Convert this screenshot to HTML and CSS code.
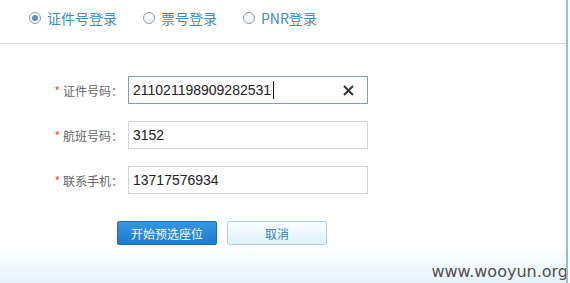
FILE: index.html
```html
<!DOCTYPE html>
<html lang="zh-CN">
<head>
    <meta charset="UTF-8">
    <title>选座登录</title>
    <link rel="stylesheet" href="styles.css">
</head>
<body>
    <div class="frame">
        <div class="tabs">
            <label class="tab"><span class="radio checked"></span>证件号登录</label>
            <label class="tab"><span class="radio"></span>票号登录</label>
            <label class="tab"><span class="radio"></span>PNR登录</label>
        </div>

        <div class="form">
            <div class="row">
                <div class="label"><span class="star">*</span>证件号码：</div>
                <div class="field focused">
                    <span class="value">211021198909282531</span><span class="caret"></span>
                    <svg class="clear" width="11" height="11" viewBox="0 0 11 11">
                        <path d="M1 1L10 10M10 1L1 10" stroke="#333" stroke-width="2" fill="none"/>
                    </svg>
                </div>
            </div>
            <div class="row">
                <div class="label"><span class="star">*</span>航班号码：</div>
                <div class="field"><span class="value">3152</span></div>
            </div>
            <div class="row">
                <div class="label"><span class="star">*</span>联系手机：</div>
                <div class="field"><span class="value">13717576934</span></div>
            </div>

            <div class="buttons">
                <button class="btn primary">开始预选座位</button>
                <button class="btn cancel">取消</button>
            </div>
        </div>

        <div class="watermark">www.wooyun.org</div>
    </div>
</body>
</html>
```

FILE: styles.css
```css
body {
    margin: 0;
    background: #fff;
    font-family: "Noto Sans CJK SC", sans-serif;
}
.frame {
    position: relative;
    width: 566px;
    height: 283px;
    border-right: 2px solid #8cbfe2;
    background: linear-gradient(to bottom, #fff 0, #fff 245px, #e6f3fb 283px);
    overflow: hidden;
}
.tabs {
    display: flex;
    align-items: center;
    gap: 26px;
    height: 35px;
    padding: 0 0 8px 29px;
    border-bottom: 1px solid #d3dbe3;
    background: #fff;
}
.tab {
    display: flex;
    align-items: center;
    gap: 6px;
    font-size: 14px;
    color: #3a8cc6;
}
.radio {
    width: 10px;
    height: 10px;
    border: 1px solid #8e9aa6;
    border-radius: 50%;
    background: linear-gradient(#fff, #eef1f4);
    display: flex;
    align-items: center;
    justify-content: center;
}
.radio.checked::after {
    content: "";
    width: 6px;
    height: 6px;
    border-radius: 50%;
    background: #4f93d4;
}
.form {
    padding-top: 32px;
}
.row {
    display: flex;
    align-items: center;
    gap: 5px;
    margin-bottom: 17px;
}
.label {
    width: 73px;
    padding-left: 50px;
    text-align: right;
    font-size: 12px;
    color: #666;
    white-space: nowrap;
}
.star {
    color: #e64a3c;
    margin-right: 3px;
}
.field {
    display: flex;
    align-items: center;
    box-sizing: border-box;
    width: 240px;
    height: 28px;
    padding: 0 13px 0 4px;
    border: 1px solid #cfd4d8;
    background: #fff;
    font-family: "Liberation Sans", Arial, sans-serif;
    font-size: 14px;
    color: #222;
}
.field.focused {
    border-color: #7f9fbf;
}
.caret {
    width: 1px;
    height: 18px;
    margin-left: 2px;
    background: #111;
}
.clear {
    margin-left: auto;
}
.buttons {
    display: flex;
    gap: 10px;
    padding-left: 117px;
    margin-top: 27px;
}
.btn {
    width: 100px;
    height: 24px;
    padding: 0;
    border-radius: 2px;
    font-family: "Noto Sans CJK SC", sans-serif;
    font-size: 12px;
    cursor: pointer;
}
.btn.primary {
    border: 1px solid #1a6cb3;
    background: linear-gradient(#3597e2, #1b7bd1);
    color: #fff;
}
.btn.cancel {
    border: 1px solid #aad3e6;
    background: linear-gradient(#fbfeff, #def1fa);
    color: #2f7fb6;
}
.watermark {
    position: absolute;
    right: -2px;
    bottom: 2px;
    font-family: "DejaVu Sans", Verdana, sans-serif;
    font-size: 16px;
    color: #4f4f4f;
}
```
